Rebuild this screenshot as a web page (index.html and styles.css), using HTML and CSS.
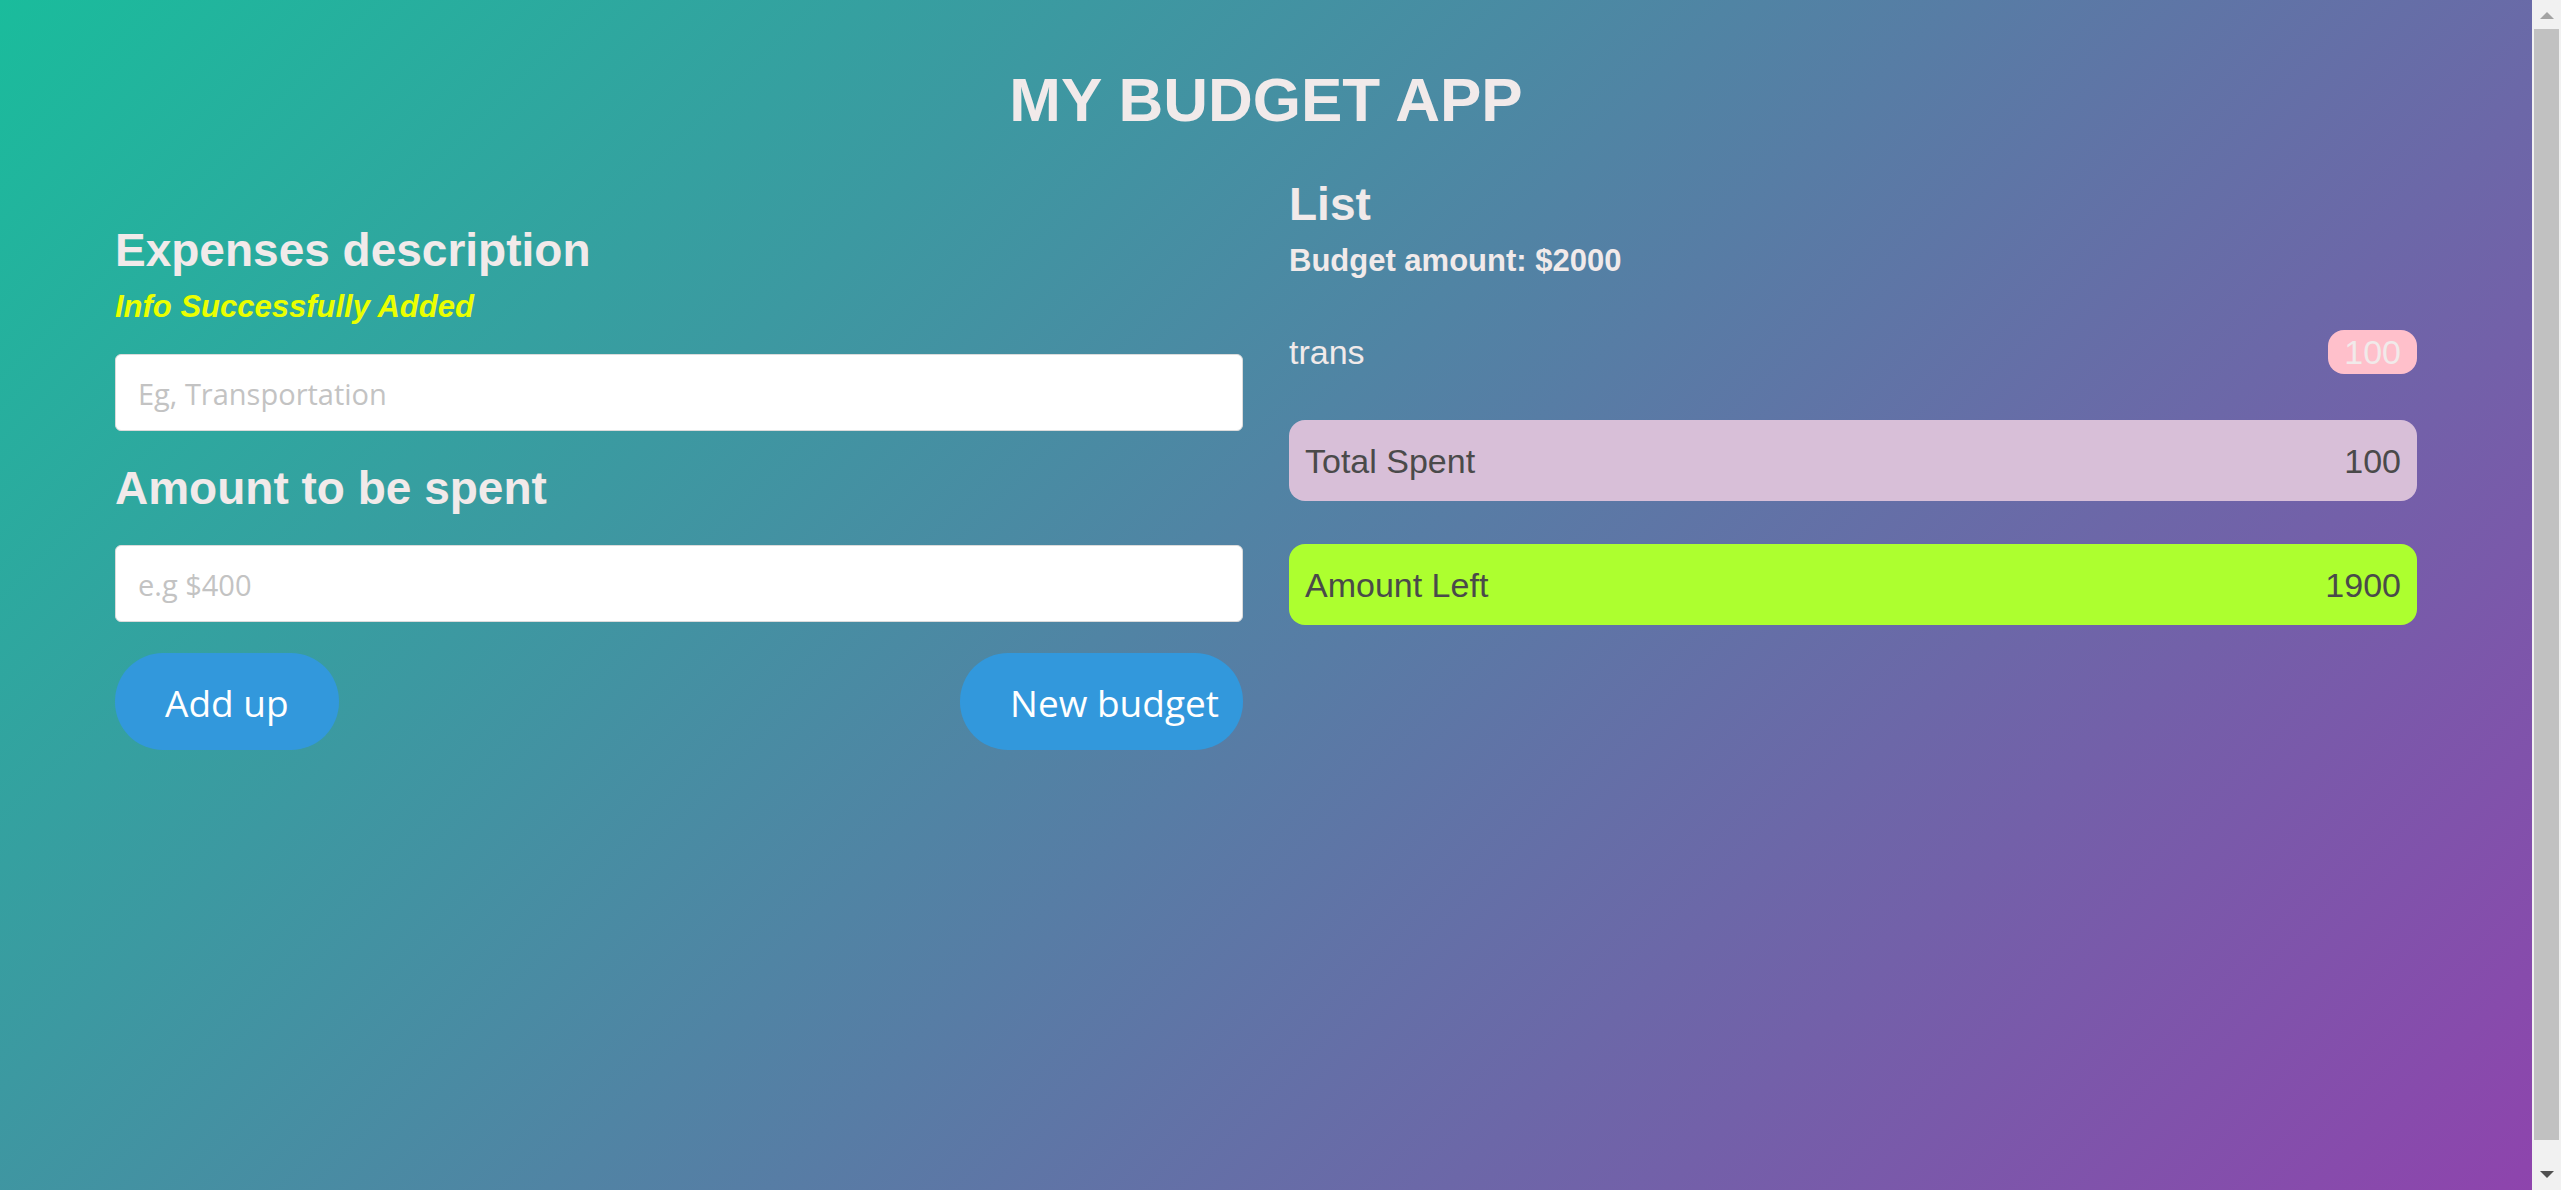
FILE: index.html
```html
<!DOCTYPE html>
<html lang="en">
<head>
  <meta charset="utf-8">
  <meta name="viewport" content="width=device-width, initial-scale=1">
  <title>My Budget App</title>
  <link rel="stylesheet" href="styles.css">
</head>
<body>
  <main class="app">
    <h1 class="app-title">MY BUDGET APP</h1>
    <div class="columns">
      <form class="expense-form">
        <label class="heading" for="description">Expenses description</label>
        <p class="notice">Info Successfully Added</p>
        <input class="input" id="description" type="text" placeholder="Eg, Transportation">
        <label class="heading amount-label" for="amount">Amount to be spent</label>
        <input class="input" id="amount" type="text" placeholder="e.g $400">
        <div class="actions">
          <button class="button add" type="button">Add up</button>
          <button class="button new" type="button">New budget</button>
        </div>
      </form>
      <section class="summary">
        <h2 class="heading">List</h2>
        <p class="budget">Budget amount: $2000</p>
        <div class="row item"><span>trans</span><span class="badge">100</span></div>
        <div class="row total spent"><span>Total Spent</span><span>100</span></div>
        <div class="row total left"><span>Amount Left</span><span>1900</span></div>
      </section>
    </div>
  </main>
  <div class="scrollbar" aria-hidden="true">
    <svg class="arrow up" viewBox="0 0 14 7"><path d="M0 7 7 0l7 7z"/></svg>
    <div class="thumb"></div>
    <svg class="arrow down" viewBox="0 0 14 7"><path d="M0 0h14L7 7z"/></svg>
  </div>
</body>
</html>
```
FILE: styles.css
```css
* {
  box-sizing: border-box;
}

body {
  display: flex;
  min-height: 100vh;
  margin: 0;
  color: #f1eaea;
  font-family: "Liberation Sans", Arial, sans-serif;
}

h1, h2, p {
  margin: 0;
}

.app {
  flex: 1;
  padding: 65px 115px;
  background: linear-gradient(135deg, #1abc9c, #8e44ad);
}

.app-title {
  font-size: 62px;
  line-height: 70px;
  text-align: center;
}

.columns {
  display: grid;
  grid-template-columns: 1fr 1fr;
  gap: 46px;
  margin-top: 43px;
}

.expense-form {
  padding-top: 46px;
}

.heading {
  display: block;
  font-size: 46px;
  font-weight: bold;
  line-height: 52px;
}

.notice,
.budget {
  margin-top: 13px;
  font-size: 31px;
  font-weight: bold;
  line-height: 36px;
}

.notice {
  margin-bottom: 29px;
  color: #eaff00;
  font-style: italic;
}

.input {
  display: block;
  width: 100%;
  height: 77px;
  padding: 2px 22px 0;
  border: 1px solid #dbdbdb;
  border-radius: 6px;
  background: #fff;
  color: #363636;
  font-family: "Open Sans", sans-serif;
  font-size: 29px;
}

.input::placeholder {
  color: #c3c3c3;
  opacity: 1;
}

.amount-label {
  margin: 31px 0;
}

.actions {
  display: flex;
  justify-content: space-between;
  margin-top: 31px;
}

.button {
  height: 97px;
  padding: 2px 50px 0;
  border: 0;
  border-radius: 48px;
  background: #3298dc;
  color: #fff;
  font-family: "Open Sans", sans-serif;
  font-size: 37px;
}

.button.new {
  padding-right: 24px;
}

.row {
  display: flex;
  justify-content: space-between;
  font-size: 34px;
  line-height: 44px;
}

.item {
  margin: 51px 0 46px;
}

.badge {
  padding: 0 16px;
  border-radius: 16px;
  background: pink;
}

.total {
  padding: 19px 16px 18px;
  border-radius: 16px;
  color: #4a4a4a;
}

.spent {
  background: thistle;
}

.left {
  margin-top: 43px;
  background: greenyellow;
}

.scrollbar {
  display: flex;
  flex-direction: column;
  align-items: center;
  width: 29px;
  padding: 12px 2px;
  background: #f1f1f1;
}

.arrow {
  width: 14px;
  height: 7px;
}

.up {
  fill: #a3a3a3;
}

.down {
  fill: #505050;
}

.thumb {
  flex: 1;
  width: 100%;
  margin: 10px 0 31px;
  background: #c1c1c1;
}
```
